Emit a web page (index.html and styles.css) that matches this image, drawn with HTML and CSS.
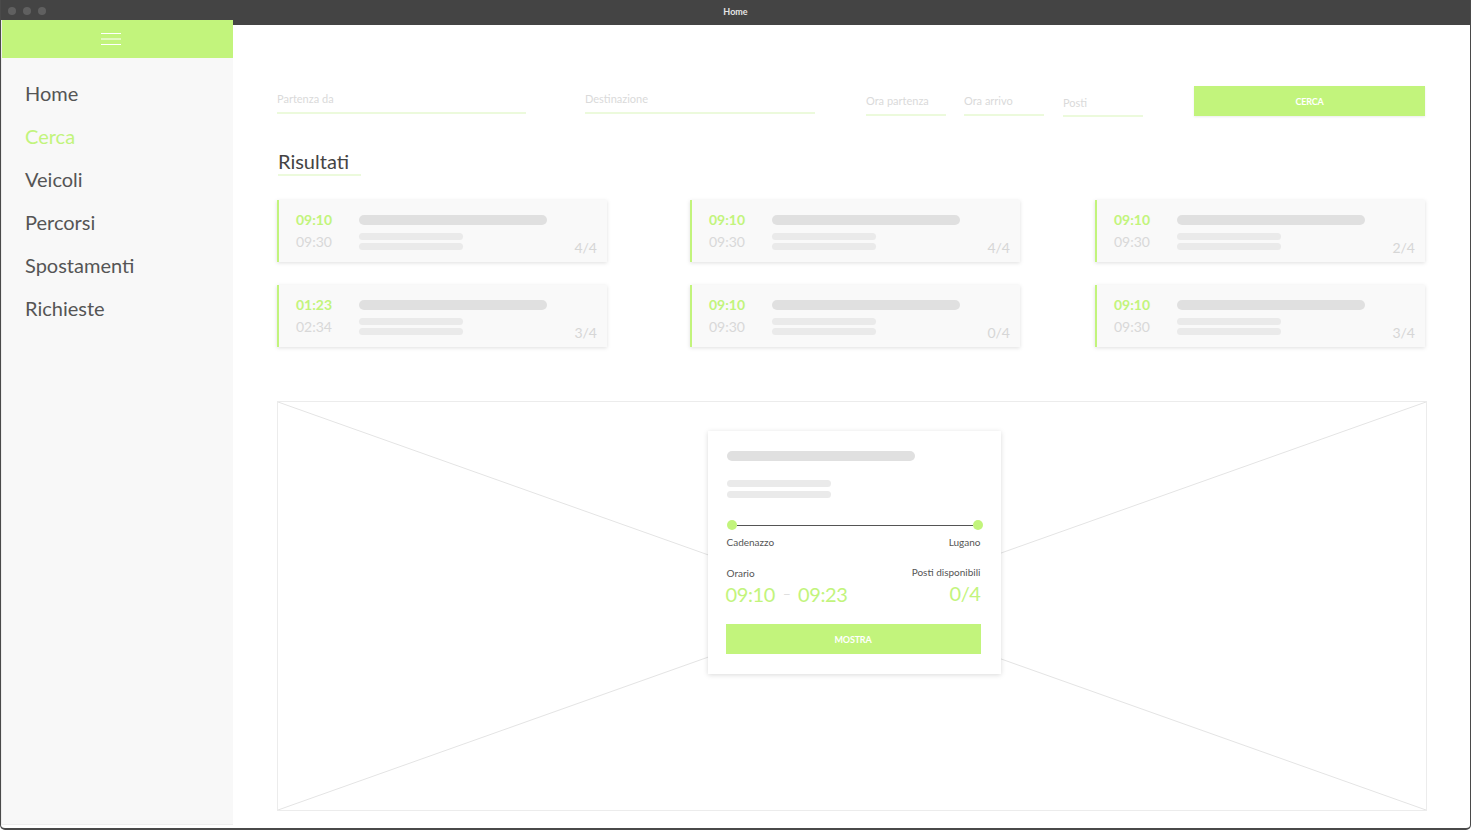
FILE: index.html
```html
<!DOCTYPE html>
<html lang="it">
<head>
<meta charset="utf-8">
<title>Home</title>
<link rel="stylesheet" href="styles.css">
</head>
<body>
<div class="window">
  <div class="titlebar">
    <div class="lights"><span></span><span></span><span></span></div>
    <div class="wtitle">Home</div>
  </div>
  <div class="frame">
    <aside class="sidebar">
      <div class="sidebar-head">
        <svg width="20" height="12" viewBox="0 0 20 12"><path d="M0 0.5H20M0 6H20M0 11.5H20" stroke="#fff" stroke-width="1"/></svg>
      </div>
      <nav class="nav">
        <a class="nav-item">Home</a>
        <a class="nav-item active">Cerca</a>
        <a class="nav-item">Veicoli</a>
        <a class="nav-item">Percorsi</a>
        <a class="nav-item">Spostamenti</a>
        <a class="nav-item">Richieste</a>
      </nav>
    </aside>
    <main class="main">
      <div class="search">
        <div class="field f-from">Partenza da</div>
        <div class="field f-to">Destinazione</div>
        <div class="field f-small f-dep">Ora partenza</div>
        <div class="field f-small f-arr">Ora arrivo</div>
        <div class="field f-small f-seats">Posti</div>
        <button class="btn btn-search">CERCA</button>
      </div>
      <h2 class="heading">Risultati</h2>
      <div class="results">
        <div class="card"><div class="times"><div class="t-start">09:10</div><div class="t-end">09:30</div></div><div class="bars"><div class="bar bar-l"></div><div class="bar bar-s"></div><div class="bar bar-s"></div></div><div class="count">4/4</div></div>
        <div class="card"><div class="times"><div class="t-start">09:10</div><div class="t-end">09:30</div></div><div class="bars"><div class="bar bar-l"></div><div class="bar bar-s"></div><div class="bar bar-s"></div></div><div class="count">4/4</div></div>
        <div class="card"><div class="times"><div class="t-start">09:10</div><div class="t-end">09:30</div></div><div class="bars"><div class="bar bar-l"></div><div class="bar bar-s"></div><div class="bar bar-s"></div></div><div class="count">2/4</div></div>
        <div class="card"><div class="times"><div class="t-start">01:23</div><div class="t-end">02:34</div></div><div class="bars"><div class="bar bar-l"></div><div class="bar bar-s"></div><div class="bar bar-s"></div></div><div class="count">3/4</div></div>
        <div class="card"><div class="times"><div class="t-start">09:10</div><div class="t-end">09:30</div></div><div class="bars"><div class="bar bar-l"></div><div class="bar bar-s"></div><div class="bar bar-s"></div></div><div class="count">0/4</div></div>
        <div class="card"><div class="times"><div class="t-start">09:10</div><div class="t-end">09:30</div></div><div class="bars"><div class="bar bar-l"></div><div class="bar bar-s"></div><div class="bar bar-s"></div></div><div class="count">3/4</div></div>
      </div>
      <div class="map">
        <svg class="map-x" viewBox="0 0 100 100" preserveAspectRatio="none"><line x1="0" y1="0" x2="100" y2="100"/><line x1="100" y1="0" x2="0" y2="100"/></svg>
        <div class="popup">
          <div class="bar bar-l p-bar1"></div>
          <div class="bar bar-s p-bar2"></div>
          <div class="bar bar-s p-bar3"></div>
          <div class="route"><span class="dot"></span><span class="line"></span><span class="dot"></span></div>
          <div class="stops"><span>Cadenazzo</span><span>Lugano</span></div>
          <div class="info">
            <div class="info-col">
              <div class="label">Orario</div>
              <div class="big">09:10 <span class="dash">–</span> 09:23</div>
            </div>
            <div class="info-col right">
              <div class="label">Posti disponibili</div>
              <div class="big">0/4</div>
            </div>
          </div>
          <button class="btn btn-show">MOSTRA</button>
        </div>
      </div>
    </main>
  </div>
</div>
</body>
</html>
```
FILE: styles.css
```css
* { box-sizing: border-box; }
html, body { margin: 0; padding: 0; }
body {
  font-family: Lato, "Open Sans", "Noto Sans", sans-serif;
  background: #fff;
  width: 1471px;
  height: 830px;
  overflow: hidden;
}
.window {
  width: 1471px;
  height: 830px;
  display: flex;
  flex-direction: column;
  border: 1px solid #4a4a4a;
  border-top: none;
  border-bottom-width: 2px;
  border-radius: 0 0 5px 5px;
  background: #fff;
  overflow: hidden;
}
.titlebar {
  height: 25px;
  flex: none;
  background: #444;
  display: flex;
  align-items: center;
  justify-content: center;
  position: relative;
}
.lights {
  position: absolute;
  left: 7px;
  top: 7px;
  display: flex;
  gap: 7px;
}
.lights span {
  width: 8px;
  height: 8px;
  border-radius: 50%;
  background: #606060;
}
.wtitle {
  color: #e4e4e4;
  font-size: 9px;
  font-weight: 700;
  margin-top: -2px;
}
.frame {
  flex: 1;
  display: flex;
  min-height: 0;
}
.sidebar {
  width: 232px;
  flex: none;
  margin-top: -5px;
  margin-bottom: 3px;
  background: #f8f8f8;
  border-left: 1px solid #ececec;
  border-bottom: 1px solid #eeeeee;
  position: relative;
  z-index: 1;
}
.sidebar-head {
  height: 38px;
  background: #c2f47c;
  display: flex;
  align-items: center;
  justify-content: center;
  padding-right: 13px;
}
.nav {
  display: flex;
  flex-direction: column;
  padding-top: 14px;
  padding-left: 23px;
}
.nav-item {
  font-size: 20px;
  line-height: 43px;
  color: #555;
}
.nav-item.active { color: #c2f47c; }
.main {
  flex: 1;
  padding: 61px 45px 0 44px;
  display: flex;
  flex-direction: column;
}
.search {
  display: flex;
  align-items: flex-end;
  height: 30px;
}
.field {
  font-size: 11px;
  line-height: 14px;
  color: #dadada;
  padding-bottom: 6px;
  border-bottom: 2px solid #ecfadc;
}
.f-from { width: 249px; margin-right: 59px; margin-bottom: 2px; }
.f-to { width: 230px; margin-right: 51px; margin-bottom: 2px; }
.f-small { width: 80px; }
.f-dep { margin-right: 18px; }
.f-arr { margin-right: 19px; }
.f-seats { margin-right: 51px; margin-bottom: -1px; padding-bottom: 5px; }
.btn {
  border: none;
  background: #c2f47c;
  color: #fff;
  font-family: inherit;
  font-weight: 700;
  font-size: 9px;
  letter-spacing: -0.2px;
  padding: 0;
}
.btn-search {
  flex: 1;
  height: 30px;
  align-self: flex-start;
  box-shadow: 0 1px 2px rgba(0,0,0,0.08);
}
.heading {
  margin: 33px 0 0 1px;
  width: 83px;
  font-size: 20px;
  line-height: 24px;
  font-weight: 400;
  color: #444;
  padding-bottom: 1px;
  border-bottom: 2px solid #ecfadc;
}
.results {
  margin-top: 24px;
  display: grid;
  grid-template-columns: 413px 405px 330px;
  row-gap: 23px;
}
.card {
  width: 330px;
  height: 62px;
  background: #f9f9f9;
  border-left: 2px solid #c2f47c;
  box-shadow: 0 1px 4px rgba(0,0,0,0.13);
  display: flex;
  padding: 0 10px 0 17px;
}
.times {
  width: 63px;
  padding-top: 9px;
  font-size: 14px;
  line-height: 22px;
}
.t-start { color: #c2f47c; font-weight: 700; }
.t-end { color: #d8d8d8; }
.bars {
  padding-top: 15px;
  width: 188px;
}
.bar { border-radius: 6px; }
.bar-l { height: 10px; width: 188px; background: #e0e0e0; margin-bottom: 8px; }
.bar-s { height: 7px; width: 104px; background: #eaeaea; margin-bottom: 3px; }
.count {
  margin-left: auto;
  align-self: flex-end;
  margin-bottom: 6px;
  font-size: 14px;
  line-height: 16px;
  color: #d6d6d6;
}
.map {
  margin-top: 54px;
  margin-right: -2px;
  height: 410px;
  border: 1px solid #ececec;
  position: relative;
  display: flex;
  justify-content: center;
  padding-top: 29px;
  padding-left: 4px;
}
.map-x {
  position: absolute;
  left: 0;
  top: 0;
  width: 100%;
  height: 100%;
}
.map-x line {
  stroke: #e4e4e4;
  stroke-width: 1;
  vector-effect: non-scaling-stroke;
}
.popup {
  position: relative;
  width: 293px;
  height: 243px;
  background: #fff;
  box-shadow: 0 1px 5px rgba(0,0,0,0.15);
  padding: 20px 20px 0 18px;
  display: flex;
  flex-direction: column;
}
.p-bar1 { margin-left: 1px; margin-bottom: 19px; }
.p-bar2 { margin-left: 1px; margin-bottom: 4px; }
.p-bar3 { margin-left: 1px; margin-bottom: 0; }
.route {
  margin-top: 22px;
  height: 10px;
  display: flex;
  align-items: center;
  padding-left: 1px;
  margin-right: -2px;
}
.dot {
  width: 10px;
  height: 10px;
  border-radius: 50%;
  background: #c2f47c;
  flex: none;
}
.line {
  flex: 1;
  height: 1px;
  background: #555;
}
.stops {
  margin-top: 6px;
  display: flex;
  justify-content: space-between;
  font-size: 10px;
  line-height: 12px;
  color: #555;
  padding-left: 1px;
}
.info {
  margin-top: 19px;
  display: flex;
  justify-content: space-between;
}
.info-col.right { text-align: right; margin-top: -1px; }
.label {
  font-size: 10px;
  line-height: 12px;
  color: #555;
  padding-left: 1px;
}
.big {
  font-size: 20px;
  line-height: 24px;
  color: #c2f47c;
  margin-top: 3px;
  letter-spacing: -0.4px;
}
.dash { color: #dddddd; font-size: 14px; vertical-align: 3px; margin: 0 3px; }
.btn-show {
  margin-top: 18px;
  height: 30px;
  width: 255px;
}
```
